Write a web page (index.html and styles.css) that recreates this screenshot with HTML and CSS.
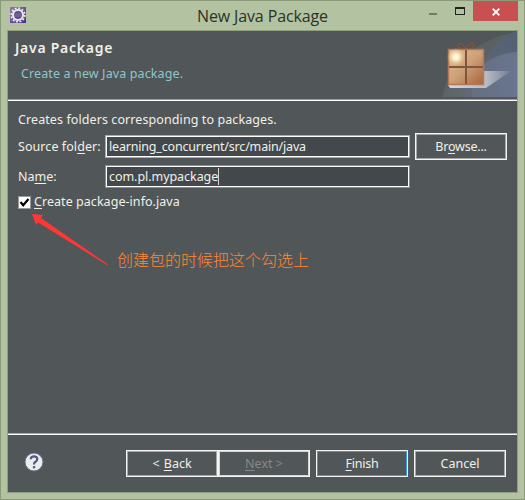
FILE: index.html
```
<!DOCTYPE html>
<html lang="en">
<head>
<meta charset="utf-8">
<title>New Java Package</title>
<link rel="stylesheet" href="styles.css">
</head>
<body>
<div class="window">
  <header class="titlebar">
    <svg class="app-icon" width="16" height="16" viewBox="0 0 16 16">
      <defs><linearGradient id="app" x1="0" y1="0" x2="1" y2="1"><stop offset="0" stop-color="#8d7aa9"/><stop offset="1" stop-color="#4c2d86"/></linearGradient></defs>
      <rect width="16" height="16" fill="url(#app)"/>
      <circle cx="8" cy="8" r="6.8" fill="none" stroke="#e9e8ec" stroke-width="1.8" stroke-dasharray="2 1.56"/>
      <circle cx="8" cy="8" r="5" fill="#5d4c83" stroke="#e9e8ec" stroke-width="2.1"/>
      <path d="M4.5 7h7M4.5 9h7" stroke="#9187a8" stroke-width=".7"/>
    </svg>
    <h1 class="title"><span>New Java Package</span></h1>
    <div class="controls">
      <span class="minimize"></span>
      <span class="maximize"></span>
      <span class="close"><svg width="8" height="8" viewBox="0 0 8 8"><path d="M.7.7l6.6 6.6M7.3.7L.7 7.3" stroke="#fff" stroke-width="1.9"/></svg></span>
    </div>
  </header>
  <main class="client">
    <section class="banner">
      <div class="banner-text">
        <h2 class="heading">Java Package</h2>
        <p class="description">Create a new Java package.</p>
      </div>
      <svg class="banner-art" width="75" height="66" viewBox="0 0 75 66">
        <defs>
          <linearGradient id="sky" x1="0" y1="0" x2="1" y2="0"><stop offset="0" stop-color="#5c6366"/><stop offset="1" stop-color="#68748f"/></linearGradient>
          <linearGradient id="arc" x1="0" y1="1" x2="1" y2="0"><stop offset="0" stop-color="#626a70"/><stop offset="1" stop-color="#536174"/></linearGradient>
          <linearGradient id="floor"><stop offset="0" stop-color="#d5d7da"/><stop offset=".6" stop-color="#b8bcc4"/><stop offset="1" stop-color="#737d93"/></linearGradient>
          <linearGradient id="box" x1="0" y1="0" x2="1" y2="1"><stop offset="0" stop-color="#e3bd87"/><stop offset=".5" stop-color="#cda077"/><stop offset="1" stop-color="#a8613a"/></linearGradient>
          <radialGradient id="shine"><stop offset="0" stop-color="#fffff0"/><stop offset=".35" stop-color="#fbefc8"/><stop offset="1" stop-color="#e8c58b" stop-opacity="0"/></radialGradient>
        </defs>
        <path d="M0 66Q5 40 28 21 48 5 75 1V66Z" fill="#596164"/>
        <path d="M0 66Q5 55 14 49L42 31Q53 8 75 0V66Z" fill="url(#arc)"/>
        <path d="M0 66Q4 55 13 50L42 34Q56 22 75 21V66Z" fill="url(#sky)"/>
        <path d="M30 66V46L42 32Q57 22 75 21V66Z" fill="#697590" opacity=".5"/>
        <path d="M6 54h36V40H69L44 57H8Z" fill="url(#floor)"/>
        <path d="M23 18Q14 17 16 14 19 10 24 18 29 10 32 13 34 17 25 18" fill="none" stroke="#765347" stroke-width="2"/>
        <rect x="6" y="18" width="36" height="36" fill="url(#box)"/>
        <rect x="6.5" y="18.5" width="35" height="35" fill="none" stroke="#b37858" stroke-width="1.5"/>
        <circle cx="14" cy="26" r="9" fill="url(#shine)"/>
        <path d="M24 19V53M7 36H41" stroke="#805541" stroke-width="2"/>
      </svg>
    </section>
    <section class="form">
      <p class="intro">Creates folders corresponding to packages.</p>
      <div class="row">
        <label class="label label-source">Source fol<u>d</u>er:</label>
        <div class="field"><span class="value-source">learning_concurrent/src/main/java</span></div>
        <div class="button browse"><span class="t-browse">Br<u>o</u>wse...</span></div>
      </div>
      <div class="row name-row">
        <label class="label label-name">Na<u>m</u>e:</label>
        <div class="field focused"><span class="value-name">com.pl.mypackage</span><i class="caret"></i></div>
      </div>
      <div class="check-row">
        <span class="checkbox"><svg width="11" height="11" viewBox="0 0 11 11"><path d="M1.5 5L4.2 8.2 9.5 2" fill="none" stroke="#000" stroke-width="2.2"/></svg></span>
        <span class="check-label"><u>C</u>reate package-info.java</span>
      </div>
      <div class="note">
        <svg class="arrow" width="76" height="53" viewBox="0 0 76 53"><path d="M0 0L11 1 9 4 76 50.5 75 51 6 8.5 4 11Z" fill="#ff3737"/></svg>
        <span class="note-text">创建包的时候把这个勾选上</span>
      </div>
    </section>
    <footer class="footer">
      <svg class="help" width="20" height="20" viewBox="0 0 20 20">
        <circle cx="10" cy="10" r="9" fill="#ececef" stroke="#647089" stroke-width="1"/>
        <path d="M6.7 7.2Q6.8 4.3 10 4.3 13.3 4.3 13.3 7 13.3 8.6 11.5 9.8 10 10.7 10 12.5" fill="none" stroke="#4d5c80" stroke-width="2.2"/>
        <rect x="8.8" y="14" width="2.5" height="2.4" rx=".8" fill="#4d5c80"/>
      </svg>
      <div class="button"><span class="t-back">&lt; <u>B</u>ack</span></div>
      <div class="button disabled"><span class="t-next"><u>N</u>ext &gt;</span></div>
      <div class="button default"><span class="t-finish"><u>F</u>inish</span></div>
      <div class="button cancel"><span class="t-cancel">Cancel</span></div>
    </footer>
  </main>
</div>
</body>
</html>
```

FILE: styles.css
```
* { box-sizing: border-box; }
body { margin: 0; }
h1, h2, p { margin: 0; font-weight: 400; }
svg { display: block; flex: none; }
u { text-decoration: underline; text-decoration-thickness: 1px; text-underline-offset: 2px; text-decoration-skip-ink: none; }

.window {
  width: 525px;
  height: 500px;
  padding: 0 6px 6px;
  border: 1px solid #8a9a79;
  background: #b3c2a1;
  font: 12.5px/18px "Noto Sans", "Open Sans", sans-serif;
  color: #f0f0e8;
  white-space: nowrap;
}
.titlebar { display: flex; height: 29px; color: #2b3329; }
.app-icon { margin: 6px 0 0 3px; }
.title { flex: 1; padding: 3px 0 0 171px; font: 16px/25px "Open Sans", sans-serif; letter-spacing: -.13px; }
.controls { display: flex; }
.minimize { width: 8px; height: 2px; margin: 12px 18px 0 0; background: #727a69; }
.maximize { width: 10px; height: 8px; margin: 6px 8px 0 0; border: 1px solid #222; border-top-width: 2px; }
.close { display: flex; align-items: center; justify-content: center; width: 45px; height: 20px; padding: 1px 0 0 1px; background: #c75050; }

.client { display: flex; flex-direction: column; height: 463px; border: 1px solid #8f9f80; background: #515658; }
.banner { display: flex; justify-content: space-between; height: 70px; border-bottom: 1px solid #fff; box-shadow: inset 0 -1px #a09d9d; }
.banner-text { padding: 8px 0 0 7px; }
.heading { font: 600 14px/18px "Noto Sans", sans-serif; letter-spacing: .75px; }
.description { padding: 8px 0 0 6px; letter-spacing: .12px; color: #8dc5ce; }

.form { flex: 1; padding: 10px 10px 0; border-bottom: 1px solid #aaa; }
.intro { letter-spacing: .09px; }
.row { display: flex; align-items: center; height: 27px; margin-top: 4px; }
.name-row { margin-top: 3px; }
.label { width: 87px; }
.label-source { letter-spacing: .07px; }
.field { display: flex; align-items: center; width: 305px; height: 23px; padding-left: 3px; border: 1px solid #aaa; box-shadow: inset 0 0 0 1px #fff; background: #43484c; }
.value-source { letter-spacing: -.18px; }
.value-name { letter-spacing: -.05px; }
.focused { border-color: #6096d2; }
.caret { width: 1px; height: 17px; background: #d6d6d6; }
.button { display: flex; align-items: center; justify-content: center; flex: none; width: 92px; height: 27px; border: 1px solid #f4f4f4; box-shadow: inset 0 0 0 1px #a7a7a7; }
.browse { margin-left: 5px; }
.t-browse { letter-spacing: -.2px; }
.check-row { display: flex; align-items: center; height: 20px; margin-top: 2px; }
.checkbox { width: 13px; height: 13px; margin-right: 3px; border: 1px solid #999; background: #fff; }
.check-label { letter-spacing: .05px; }
.note { display: flex; margin: 2px 0 0 14px; }
.note-text { margin: 33px 0 0 9px; font: 16px/24px "Noto Sans CJK SC", sans-serif; font-weight: 300; color: #ff8833; }

.footer { display: flex; height: 58px; padding: 15px 11px 0 16px; border-top: 1px solid #fff; }
.help { margin: 2px 82px 0 0; }
.t-back { word-spacing: 1px; }
.disabled { color: #858989; border-color: #f4f4f4; box-shadow: inset 0 0 0 1px #d6d6d6; }
.default { margin-left: 6px; box-shadow: inset 0 0 0 1px #3399ff; }
.t-finish { letter-spacing: -.2px; }
.cancel { margin-left: 6px; }
```
